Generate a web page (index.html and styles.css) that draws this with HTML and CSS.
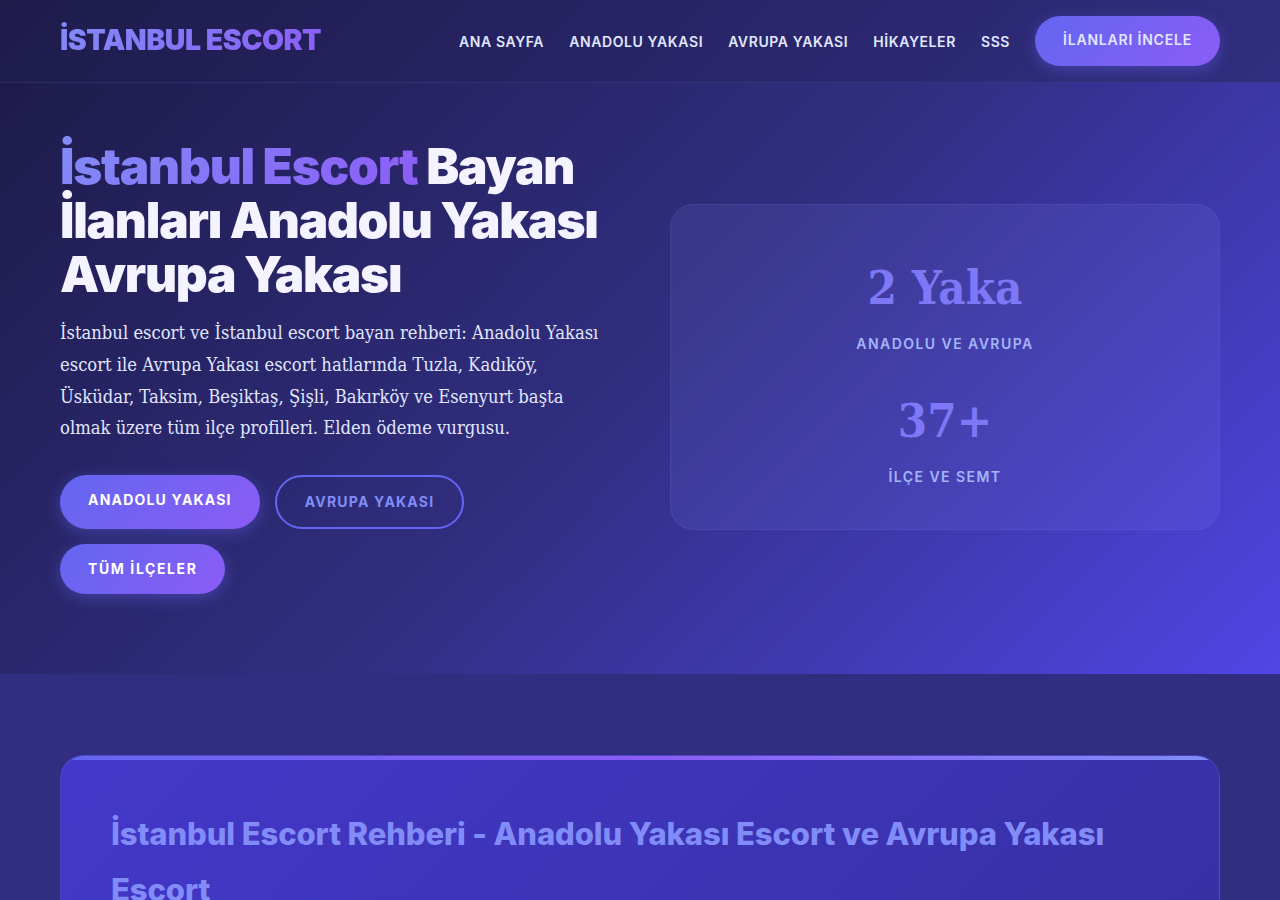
FILE: index.html
```html
<!DOCTYPE html>
<html lang="tr">
<head>
    <meta charset="UTF-8">
    <meta name="viewport" content="width=device-width, initial-scale=1.0">
    <title>İstanbul Escort</title>
    <link rel="stylesheet" href="styles.css">
</head>
<body>
    <div class="page">
        <header class="site-header">
            <a class="logo" href="#">İSTANBUL ESCORT</a>
            <nav class="main-nav">
                <a href="#">ANA SAYFA</a>
                <a href="#">ANADOLU YAKASI</a>
                <a href="#">AVRUPA YAKASI</a>
                <a href="#">HİKAYELER</a>
                <a href="#">SSS</a>
                <a class="nav-cta" href="#">İLANLARI İNCELE</a>
            </nav>
        </header>

        <section class="hero">
            <div class="hero-text">
                <h1><span class="grad-text">İstanbul Escort</span> Bayan İlanları Anadolu Yakası Avrupa Yakası</h1>
                <p>İstanbul escort ve İstanbul escort bayan rehberi: Anadolu Yakası escort ile Avrupa Yakası escort hatlarında Tuzla, Kadıköy, Üsküdar, Taksim, Beşiktaş, Şişli, Bakırköy ve Esenyurt başta olmak üzere tüm ilçe profilleri. Elden ödeme vurgusu.</p>
                <div class="hero-btns">
                    <a class="btn btn-main btn-tall" href="#">ANADOLU YAKASI</a>
                    <a class="btn btn-line" href="#">AVRUPA YAKASI</a>
                    <a class="btn btn-main btn-wide" href="#">TÜM İLÇELER</a>
                </div>
            </div>
            <div class="stats-card">
                <div class="stat">
                    <div class="stat-num">2 Yaka</div>
                    <div class="stat-label">ANADOLU VE AVRUPA</div>
                </div>
                <div class="stat">
                    <div class="stat-num">37+</div>
                    <div class="stat-label">İLÇE VE SEMT</div>
                </div>
            </div>
        </section>

        <section class="guide">
            <div class="guide-card">
                <h2>İstanbul Escort Rehberi - Anadolu Yakası Escort ve Avrupa Yakası Escort</h2>
            </div>
        </section>
    </div>
</body>
</html>
```

FILE: styles.css
```css
* {
    margin: 0;
    padding: 0;
    box-sizing: border-box;
}

body {
    font-family: 'Inter', sans-serif;
    background: #312e81;
    color: #f5f3ff;
}

a {
    text-decoration: none;
    color: inherit;
}

.page {
    height: 900px;
    overflow: hidden;
}

.site-header {
    height: 83px;
    display: flex;
    justify-content: space-between;
    align-items: center;
    padding: 0 60px;
    background: linear-gradient(135deg, #1e1b4b, #312e81);
    border-bottom: 1px solid rgba(129, 140, 248, 0.15);
}

.logo {
    font-size: 28.5px;
    font-weight: 900;
    letter-spacing: -0.5px;
    margin-top: -3px;
    background: linear-gradient(135deg, #818cf8, #8b5cf6);
    -webkit-background-clip: text;
    background-clip: text;
    color: transparent;
}

.main-nav {
    display: flex;
    align-items: center;
    gap: 25px;
    font-size: 14px;
    font-weight: 600;
    letter-spacing: 0.6px;
    color: #e0e7ff;
}

.nav-cta {
    padding: 15px 28px;
    height: 50px;
    border-radius: 25px;
    line-height: 17px;
    letter-spacing: 0.8px;
    background: linear-gradient(135deg, #6366f1, #8b5cf6);
    box-shadow: 0 4px 15px rgba(99, 102, 241, 0.4);
}

.hero {
    height: 591px;
    display: grid;
    grid-template-columns: 1fr 1fr;
    gap: 60px;
    align-items: center;
    padding: 56px 60px 80px;
    background: linear-gradient(135deg, #1e1b4b 0%, #312e81 50%, #4f46e5 100%);
}

.hero h1 {
    font-size: 49.5px;
    font-weight: 900;
    letter-spacing: -1.25px;
    line-height: 54px;
    margin-bottom: 16px;
}

.grad-text {
    background: linear-gradient(135deg, #818cf8, #8b5cf6);
    -webkit-background-clip: text;
    background-clip: text;
    color: transparent;
}

.hero p {
    font-family: 'DejaVu Serif', serif;
    font-stretch: condensed;
    font-size: 18.25px;
    line-height: 31.7px;
    color: #e0e7ff;
    margin-bottom: 31px;
}

.hero-btns {
    display: flex;
    flex-wrap: wrap;
    gap: 15px;
}

.btn {
    display: flex;
    align-items: center;
    height: 50px;
    padding: 0 28px;
    border-radius: 27px;
    font-size: 14px;
    font-weight: 700;
    letter-spacing: 1.2px;
}

.btn-main {
    color: #fff;
    background: linear-gradient(135deg, #6366f1, #8b5cf6);
    box-shadow: 0 4px 15px rgba(99, 102, 241, 0.4);
}

.btn-tall {
    height: 54px;
    padding-bottom: 4px;
}

.btn-wide {
    letter-spacing: 1.6px;
}

.btn-line {
    height: 54px;
    color: #818cf8;
    border: 2px solid #6366f1;
}

.stats-card {
    padding: 50px 50px 44px;
    display: flex;
    flex-direction: column;
    gap: 36px;
    text-align: center;
    background: rgba(129, 140, 248, 0.12);
    border: 1px solid rgba(129, 140, 248, 0.12);
    border-radius: 24px;
}

.stat-num {
    font-family: 'DejaVu Serif', serif;
    font-stretch: condensed;
    font-size: 47px;
    font-weight: 700;
    line-height: 66px;
    color: #7f78f6;
    margin-bottom: 14px;
}

.stat-label {
    font-size: 14px;
    font-weight: 600;
    letter-spacing: 1.45px;
    color: #a5b4fc;
}

.guide {
    padding: 81px 60px;
    background: #312e81;
}

.guide-card {
    position: relative;
    overflow: hidden;
    padding: 50px;
    background: linear-gradient(135deg, #4338ca, #3730a3);
    border: 1px solid rgba(129, 140, 248, 0.2);
    border-radius: 24px;
}

.guide-card::before {
    content: "";
    position: absolute;
    top: 0;
    left: 0;
    right: 0;
    height: 4px;
    background: linear-gradient(90deg, #6366f1, #8b5cf6, #818cf8);
}

.guide-card h2 {
    font-size: 31px;
    font-weight: 800;
    letter-spacing: -0.1px;
    line-height: 56px;
    color: #818cf8;
}
```
